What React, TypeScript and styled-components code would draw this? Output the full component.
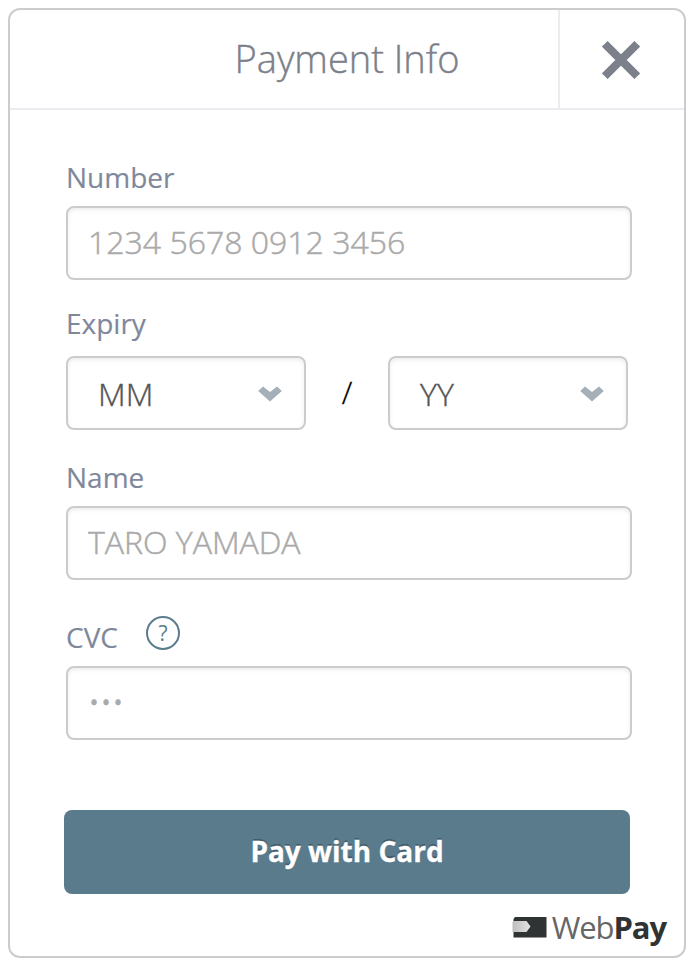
import React from 'react';
import styled, { createGlobalStyle } from 'styled-components';

const GlobalStyle = createGlobalStyle`
  * { box-sizing: border-box; }
  body {
    margin: 0;
    padding: 8px;
    background: #fff;
    font-family: 'Open Sans', 'Noto Sans', sans-serif;
  }
`;

const Card = styled.main`
  width: 678px;
  height: 950px;
  border: 2px solid #ccc;
  border-radius: 12px;
  background: #fff;
  display: flex;
  flex-direction: column;
  overflow: hidden;
`;

const Header = styled.header`
  display: flex;
  height: 100px;
  border-bottom: 2px solid #ebebf2;
`;

const Title = styled.h1`
  flex: 1;
  margin: 0;
  padding-left: 126px;
  text-align: center;
  font-size: 38px;
  font-weight: 300;
  line-height: 96px;
  color: #7b808a;
  -webkit-text-stroke: 0.4px #7b808a;
`;

const CloseButton = styled.button`
  width: 126px;
  padding: 2px 2px 0 0;
  border: 0;
  border-left: 2px solid #ebebf2;
  background: none;
  display: flex;
  align-items: center;
  justify-content: center;
`;

const Form = styled.form`
  padding: 48px 52px 0 56px;
  display: flex;
  flex-direction: column;
`;

const Field = styled.div<{ $gap: number }>`
  display: flex;
  flex-direction: column;
  margin-bottom: ${(p) => p.$gap}px;
`;

const LabelRow = styled.div<{ $height: number; $space?: number }>`
  display: flex;
  align-items: flex-end;
  height: ${(p) => p.$height}px;
  padding-bottom: ${(p) => p.$space ?? 10}px;
`;

const Label = styled.label`
  font-size: 28px;
  line-height: 38px;
  color: #7f889b;
  -webkit-text-stroke: 0.15px #7f889b;
`;

const fieldBox = `
  height: 74px;
  border: 2px solid #ccc;
  border-radius: 8px;
  background: #fff;
  box-shadow: inset 0 2px 4px rgba(0, 0, 0, 0.075);
  font-family: 'Open Sans', 'Noto Sans', sans-serif;
  font-size: 32px;
  font-weight: 300;
  outline: none;
`;

const Input = styled.input`
  ${fieldBox}
  width: 566px;
  padding: 0 20px 4px;
  &::placeholder {
    color: #aaa;
    opacity: 1;
    -webkit-text-stroke: 0.5px #aaa;
  }
`;

const ExpiryRow = styled.div`
  display: flex;
  align-items: center;
  height: 74px;
`;

const SelectBox = styled.div`
  ${fieldBox}
  width: 240px;
  padding: 2px 22px 0 30px;
  color: #555;
  display: flex;
  align-items: center;
  justify-content: space-between;
`;

const SelectValue = styled.span`
  padding-bottom: 1px;
  -webkit-text-stroke: 0.4px #555;
`;

const Slash = styled.span`
  width: 82px;
  text-align: center;
  font-size: 31px;
  font-weight: 300;
  line-height: 70px;
  padding-bottom: 2px;
  color: #000;
  -webkit-text-stroke: 0.3px #000;
`;

const Help = styled.span`
  width: 34px;
  height: 34px;
  margin: 0 0 6px 28px;
  border: 2px solid #5a7c8d;
  border-radius: 50%;
  display: flex;
  align-items: center;
  justify-content: center;
  font-size: 21px;
  line-height: 30px;
  color: #5a7c8d;
`;

const PayButton = styled.button`
  width: 566px;
  height: 84px;
  margin-left: -2px;
  padding: 0 0 2px;
  border: 0;
  border-radius: 8px;
  background: #5a7b8c;
  color: #fff;
  font-family: 'Open Sans', 'Noto Sans', sans-serif;
  font-size: 28px;
  font-weight: 700;
  text-shadow: 0 -2px 0 rgba(0, 0, 0, 0.25);
  -webkit-text-stroke: 0.3px #fff;
`;

const Brand = styled.footer`
  display: flex;
  justify-content: flex-end;
  align-items: center;
  height: 44px;
  margin-top: 11px;
  padding-right: 18px;
  color: #2f3333;
  font-size: 31px;
  line-height: 44px;
  letter-spacing: -1.1px;
`;

const BrandMark = styled.svg`
  margin-right: 5px;
`;

const BrandThin = styled.span`
  color: #666;
`;

const BrandBold = styled.strong`
  font-weight: 700;
`;

const Chevron = () => (
  <svg width="24" height="16" viewBox="0 0 24 16" aria-hidden="true">
    <path d="M0.2 5 L5 0.4 L12 6 L19 0.4 L23.8 5 L12 15.6 Z" fill="#a5afb8" />
  </svg>
);

export default function App() {
  return (
    <>
      <GlobalStyle />
      <Card>
        <Header>
          <Title>Payment Info</Title>
          <CloseButton type="button" aria-label="Close">
            <svg width="38" height="38" viewBox="0 0 38 38">
              <path d="M2.8 2.8 L35.2 35.2 M35.2 2.8 L2.8 35.2" stroke="#7b808a" strokeWidth="8" />
            </svg>
          </CloseButton>
        </Header>
        <Form>
          <Field $gap={26}>
            <LabelRow $height={48}>
              <Label htmlFor="number">Number</Label>
            </LabelRow>
            <Input id="number" placeholder="1234 5678 0912 3456" />
          </Field>
          <Field $gap={26}>
            <LabelRow $height={50} $space={14}>
              <Label as="span">Expiry</Label>
            </LabelRow>
            <ExpiryRow>
              <SelectBox role="combobox">
                <SelectValue>MM</SelectValue>
                <Chevron />
              </SelectBox>
              <Slash>/</Slash>
              <SelectBox role="combobox">
                <SelectValue>YY</SelectValue>
                <Chevron />
              </SelectBox>
            </ExpiryRow>
          </Field>
          <Field $gap={36}>
            <LabelRow $height={50}>
              <Label htmlFor="name">Name</Label>
            </LabelRow>
            <Input id="name" placeholder="TARO YAMADA" />
          </Field>
          <Field $gap={70}>
            <LabelRow $height={50}>
              <Label htmlFor="cvc">CVC</Label>
              <Help>?</Help>
            </LabelRow>
            <Input id="cvc" placeholder="•••" />
          </Field>
          <PayButton type="button">Pay with Card</PayButton>
        </Form>
        <Brand>
          <BrandMark width="35" height="22" viewBox="0 0 35 22" aria-hidden="true">
            <defs>
              <linearGradient id="plug" x1="0" y1="0" x2="1" y2="0">
                <stop offset="0" stopColor="#bdbdbd" />
                <stop offset="1" stopColor="#e4e4e4" />
              </linearGradient>
            </defs>
            <path d="M3 1 H34.5 V21.5 H1.5 V3 Z" fill="#2f3333" />
            <path d="M0.5 6 L2 5 H14.5 L18.5 10.5 L14.5 16 H0.5 Z" fill="url(#plug)" />
          </BrandMark>
          <BrandThin>Web</BrandThin>
          <BrandBold>Pay</BrandBold>
        </Brand>
      </Card>
    </>
  );
}
